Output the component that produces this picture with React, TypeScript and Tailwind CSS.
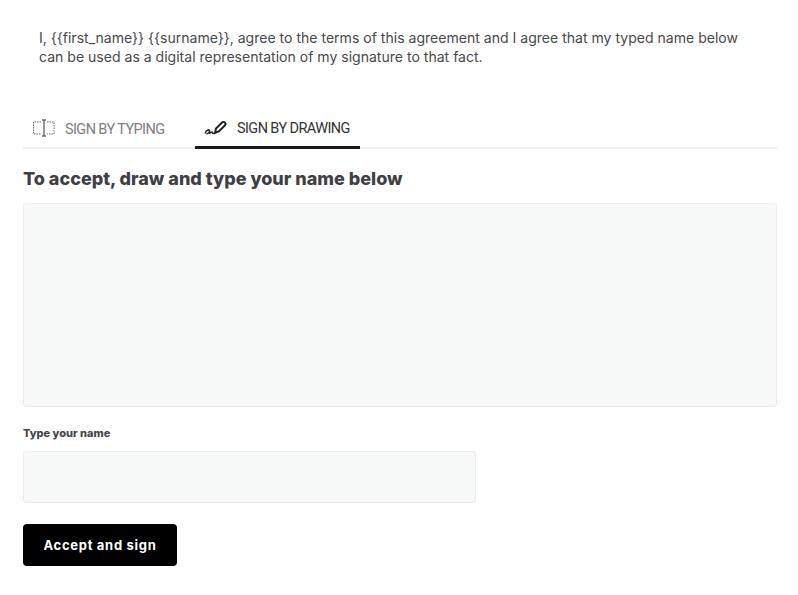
function TypingIcon() {
  return (
    <svg className="-mt-[3px]" width="24" height="18" viewBox="0 0 24 18" fill="none" stroke="#666">
      <path d="M9 3H1.5v12H9M15 3h7v12h-7" strokeDasharray="1.5 1" />
      <path d="M12 1v16M10 1h4M10 17h4" strokeWidth="1.4" />
    </svg>
  );
}

function DrawingIcon() {
  return (
    <svg width="24" height="16" viewBox="0 0 24 16" fill="none" stroke="#222">
      <path d="M1 12.5c1-3 3.5-4.5 4.5-3 .6 1-1.5 3.5-3 3.5M5 12.5c1-.5 2-1.5 3-1.5 0 1 1 1.5 2 1" strokeWidth="1.5" />
      <path d="M11 12l1-4.5 6-6c1-.8 2.7-.6 3.2.3.5.9.4 1.8-.4 2.7l-6 6z" strokeWidth="2" />
    </svg>
  );
}

export default function App() {
  return (
    <div className="min-h-screen bg-white pl-[23px] pr-[21px] pt-[28px] font-['Inter',sans-serif] text-[#48494d]">
      <p className="pl-[16px] text-[14.05px] leading-[19px]">
        I, {"{{first_name}}"} {"{{surname}}"}, agree to the terms of this agreement and I agree that my typed name below
        <br />
        can be used as a digital representation of my signature to that fact.
      </p>

      {/* tabs */}
      <div className="mt-[42px] flex h-[41px] border-b-2 border-[#f0f0f0] font-['Roboto',sans-serif] text-[14.5px] tracking-[-0.6px]">
        <div className="flex h-[40px] w-[172px] items-center gap-[9px] pl-[9px] pt-[3px] text-[#7d7e81]">
          <TypingIcon />
          <span>SIGN BY TYPING</span>
        </div>
        <div className="flex h-[41px] w-[165px] items-center gap-[9px] border-b-[3px] border-[#1b1b1b] pl-[9px] pt-[3px] text-[#333]">
          <DrawingIcon />
          <span>SIGN BY DRAWING</span>
        </div>
      </div>

      <h2 className="mt-[18px] text-[18px] leading-[24px] font-extrabold text-[#3f4044]">To accept, draw and type your name below</h2>

      <div className="mt-[12px] h-[204px] rounded-[3px] border border-[#ececec] bg-[#f7f8f8]" />

      <label className="mt-[19px] block text-[11px] leading-[14px] font-extrabold text-[#45464a]">Type your name</label>
      <div className="mt-[11px] h-[52px] w-[453px] rounded-[3px] border border-[#ececec] bg-[#f7f8f8]" />

      <button className="mt-[21px] flex h-[42px] w-[154px] items-center justify-center rounded-[4px] bg-black pt-[2px] text-[13px] font-bold tracking-[0.7px] text-white">
        Accept and sign
      </button>
    </div>
  );
}
